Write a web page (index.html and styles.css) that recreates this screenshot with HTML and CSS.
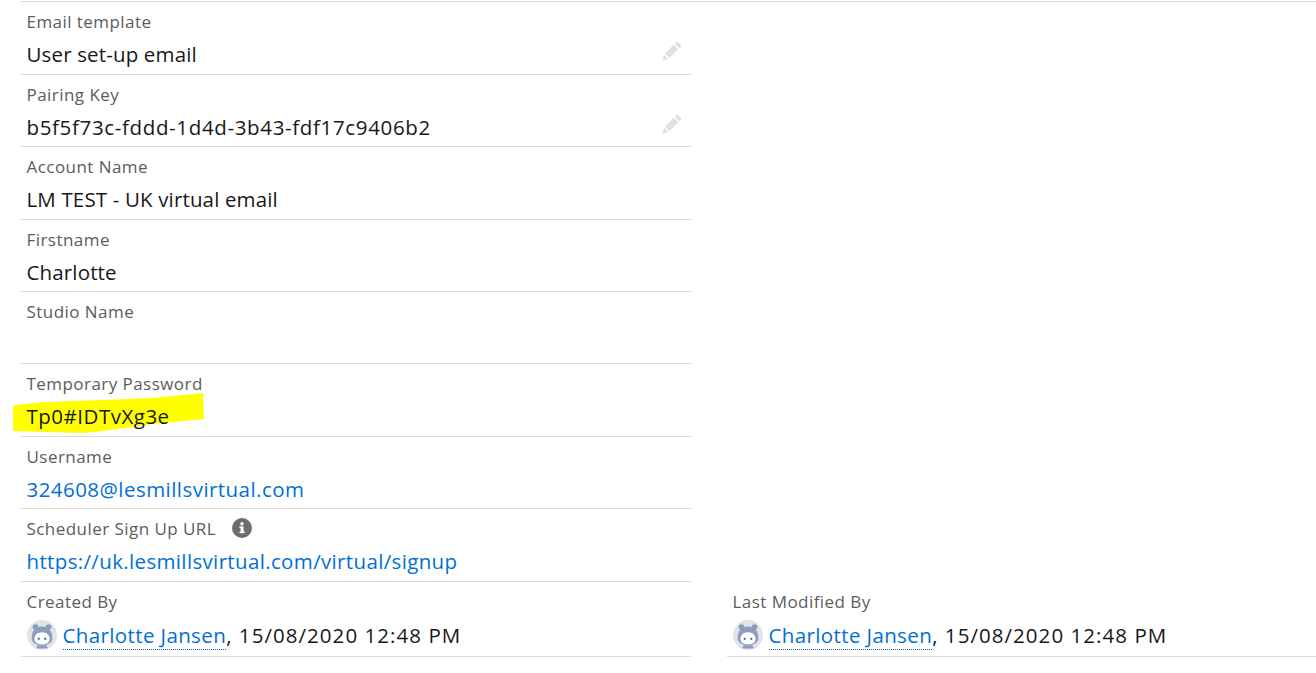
FILE: index.html
```html
<!DOCTYPE html>
<html lang="en">
<head>
    <meta charset="UTF-8">
    <meta name="viewport" content="width=device-width, initial-scale=1.0">
    <title>User Details</title>
    <link rel="stylesheet" href="styles.css">
</head>
<body>
    <div class="record">
        <div class="field">
            <div class="label">Email template</div>
            <div class="value">User set-up email</div>
            <svg class="edit" viewBox="0 0 22 22"><path d="M15.6 1.4l-1.5 1.5 5 5 1.5-1.5c.6-.6.6-1.500 0-2.100l-2.900-2.900c-.6-.6-1.500-.6-2.100 0zM12.800 4.200L3.300 13.700l5 5 9.500-9.500zM2.300 15.200L.5 21.500l6.300-1.800z"/></svg>
        </div>
        <div class="field">
            <div class="label">Pairing Key</div>
            <div class="value digits">b5f5f73c-fddd-1d4d-3b43-fdf17c9406b2</div>
            <svg class="edit" viewBox="0 0 22 22"><path d="M15.6 1.4l-1.5 1.5 5 5 1.5-1.5c.6-.6.6-1.500 0-2.100l-2.900-2.900c-.6-.6-1.500-.6-2.100 0zM12.800 4.200L3.300 13.700l5 5 9.500-9.500zM2.300 15.200L.5 21.500l6.300-1.800z"/></svg>
        </div>
        <div class="field">
            <div class="label">Account Name</div>
            <div class="value">LM TEST - UK virtual email</div>
        </div>
        <div class="field">
            <div class="label">Firstname</div>
            <div class="value">Charlotte</div>
        </div>
        <div class="field short">
            <div class="label">Studio Name</div>
            <div class="value">&nbsp;</div>
        </div>
        <div class="field">
            <div class="label">Temporary Password</div>
            <svg class="marker" viewBox="0 0 192 42"><path d="M0 14l3-1 27-3 60-2 50-2 30-3 20-2 1 26-51 5-50 7-20 2-70-2z"/></svg>
            <div class="value over">Tp0#IDTvXg3e</div>
        </div>
        <div class="field">
            <div class="label">Username</div>
            <div class="value mail"><a href="#">324608@lesmillsvirtual.com</a></div>
        </div>
        <div class="field">
            <div class="label">Scheduler Sign Up URL
                <svg class="info" viewBox="0 0 20 20"><circle cx="10" cy="10" r="10"/><rect x="8.600" y="8.500" width="3" height="6.500" fill="#fff"/><rect x="7.500" y="8.500" width="3" height="1.500" fill="#fff"/><rect x="7.500" y="13.600" width="5.200" height="1.500" fill="#fff"/><circle cx="10" cy="5.800" r="1.700" fill="#fff"/></svg>
            </div>
            <div class="value link"><a href="#">https://uk.lesmillsvirtual.com/virtual/signup</a></div>
        </div>
        <div class="columns">
            <div class="field last">
                <div class="label">Created By</div>
                <div class="value owner">
                    <svg class="avatar" viewBox="0 0 32 32"><circle cx="16" cy="16" r="16" fill="#dfe3ea"/><circle cx="9" cy="7.500" r="3" fill="#8c9dbc"/><circle cx="23" cy="7.500" r="3" fill="#8c9dbc"/><path d="M5 19c0-7 4-12 11-12s11 5 11 12c0 5-4 8-11 8S5 24 5 19z" fill="#8c9dbc"/><path d="M8 20c0-4 3-7 8-7s8 3 8 7-3 6-8 6-8-2-8-6z" fill="#fff"/><circle cx="12.500" cy="20" r="1.200" fill="#4a5a78"/><circle cx="19.500" cy="20" r="1.200" fill="#4a5a78"/><path d="M11 27h10l1 3.500H10z" fill="#8c9dbc"/></svg>
                    <span class="stamp"><a href="#" class="user">Charlotte Jansen</a>, 15/08/2020 12:48 PM</span>
                </div>
            </div>
            <div class="field last">
                <div class="label">Last Modified By</div>
                <div class="value owner">
                    <svg class="avatar" viewBox="0 0 32 32"><circle cx="16" cy="16" r="16" fill="#dfe3ea"/><circle cx="9" cy="7.500" r="3" fill="#8c9dbc"/><circle cx="23" cy="7.500" r="3" fill="#8c9dbc"/><path d="M5 19c0-7 4-12 11-12s11 5 11 12c0 5-4 8-11 8S5 24 5 19z" fill="#8c9dbc"/><path d="M8 20c0-4 3-7 8-7s8 3 8 7-3 6-8 6-8-2-8-6z" fill="#fff"/><circle cx="12.500" cy="20" r="1.200" fill="#4a5a78"/><circle cx="19.500" cy="20" r="1.200" fill="#4a5a78"/><path d="M11 27h10l1 3.500H10z" fill="#8c9dbc"/></svg>
                    <span class="stamp"><a href="#" class="user">Charlotte Jansen</a>, 15/08/2020 12:48 PM</span>
                </div>
            </div>
        </div>
    </div>
</body>
</html>
```

FILE: styles.css
```css
* {
    margin: 0;
    padding: 0;
    box-sizing: border-box;
}

body {
    font-family: "Open Sans", sans-serif;
    background: #fff;
    color: #181818;
    height: 673px;
    overflow: hidden;
    padding: 1px 0 0 21px;
}

.record {
    border-top: 1px solid #dddbda;
}

.field {
    position: relative;
    width: 670px;
    height: 72.5px;
    padding: 8px 5.5px 0;
    border-bottom: 1px solid #dddbda;
}

.short {
    height: 72px;
}

.label {
    font-size: 17px;
    line-height: 24px;
    letter-spacing: 0.45px;
    color: #5c5c5c;
    display: flex;
    align-items: center;
    gap: 15px;
}

.value {
    font-size: 20.5px;
    line-height: 30px;
    letter-spacing: 0.15px;
    margin-top: 5px;
}

.value.over {
    position: relative;
    letter-spacing: 0.5px;
}

.digits {
    letter-spacing: 0.65px;
}

.mail {
    letter-spacing: 0.45px;
}

.link {
    letter-spacing: 0.35px;
}

a {
    color: #0070d2;
    text-decoration: none;
}

.stamp {
    letter-spacing: 1.05px;
}

.user {
    letter-spacing: 0.38px;
    border-bottom: 1px dotted #0b5cab;
}

.edit {
    position: absolute;
    top: 39px;
    right: 9px;
    width: 20px;
    height: 20px;
    fill: #e0e0e0;
}

.marker {
    position: absolute;
    left: -8px;
    top: 28px;
    width: 192px;
    height: 42px;
    fill: #ff0;
}

.info {
    width: 20px;
    height: 20px;
    margin-top: -2px;
    margin-left: 1px;
    fill: #706e6b;
}

.columns {
    display: flex;
    gap: 36px;
}

.last {
    height: 75px;
}

.last + .last {
    flex: 1;
    margin-right: -21px;
}

.owner {
    display: flex;
    align-items: center;
    gap: 6px;
    margin-top: 6px;
}

.avatar {
    width: 30px;
    height: 30px;
    flex: none;
}
```
